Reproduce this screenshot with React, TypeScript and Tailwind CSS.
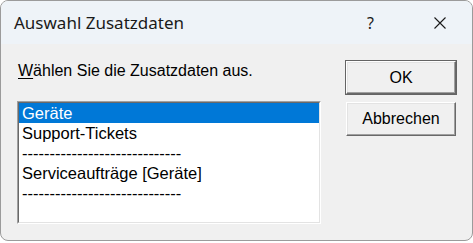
const items = [
  "Geräte",
  "Support-Tickets",
  "-----------------------------",
  "Serviceaufträge [Geräte]",
  "-----------------------------",
];

export default function App() {
  const selected = 0;

  return (
    <div className="w-[473px] h-[243px] bg-white">
      <div className="w-[473px] h-[241px] flex flex-col rounded-lg border border-[#9b9b9b] overflow-hidden bg-[#f0f0f0]">
        {/* Title bar */}
        <div className="h-[43px] flex items-center bg-[#eef3f8] pl-[13px] font-['Noto_Sans',sans-serif]">
          <span className="text-[17px] text-[#1a1a1a]">Auswahl Zusatzdaten</span>
          <span className="ml-auto mr-[60px] text-[16px] text-[#1a1a1a]">?</span>
          <svg width="12" height="12" viewBox="0 0 12 12" className="mr-[26px]">
            <path d="M0.5 0.5 L11.5 11.5 M11.5 0.5 L0.5 11.5" stroke="#1a1a1a" strokeWidth="1.1" />
          </svg>
        </div>

        {/* Client area */}
        <div className="flex flex-1 pl-4 font-['Liberation_Sans',sans-serif] text-black">
          <div className="flex flex-col">
            <div className="mt-[18px] ml-[1px] leading-[18px] text-[16px]">
              <span className="underline underline-offset-2">W</span>ählen Sie die Zusatzdaten aus.
            </div>
            <div className="mt-[21px] w-[304px] h-[123px] border border-t-[#a0a0a0] border-l-[#a0a0a0] border-r-white border-b-white">
              <div className="h-full border border-t-[#696969] border-l-[#696969] border-r-[#e3e3e3] border-b-[#e3e3e3] bg-white text-[16.5px]">
                {items.map((item, i) => (
                  <div
                    key={i}
                    className={`h-[20px] leading-[20px] pl-[3px] whitespace-nowrap ${
                      i === selected ? "bg-[#0078d7] text-white" : "text-black"
                    }`}
                  >
                    {item}
                  </div>
                ))}
              </div>
            </div>
          </div>

          <div className="ml-[24px] mt-[16px] flex flex-col gap-[7px]">
            <div className="w-[112px] h-[35px] border border-[#646464]">
              <button className="w-full h-full border border-t-white border-l-white border-r-[#696969] border-b-[#696969] shadow-[inset_-1px_-1px_0_#a0a0a0,inset_1px_1px_0_#e3e3e3] bg-[#f0f0f0] text-[16px]">
                OK
              </button>
            </div>
            <button className="ml-[1px] w-[110px] h-[34px] border border-t-white border-l-white border-r-[#696969] border-b-[#696969] shadow-[inset_-1px_-1px_0_#a0a0a0,inset_1px_1px_0_#e3e3e3] bg-[#f0f0f0] text-[16px]">
              Abbrechen
            </button>
          </div>
        </div>
      </div>
    </div>
  );
}
